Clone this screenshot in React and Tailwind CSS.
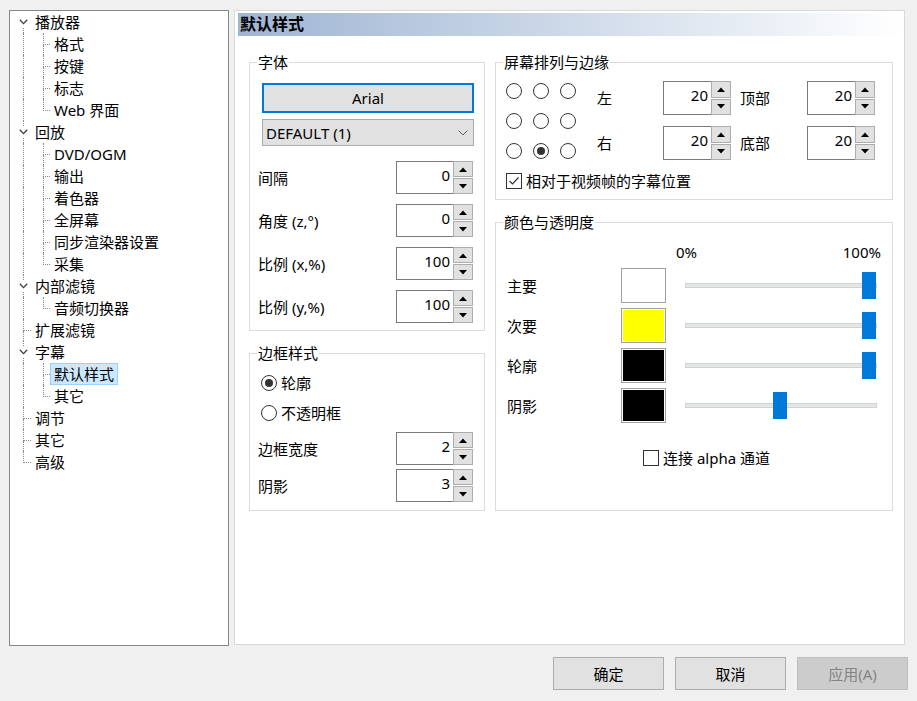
import React from "react";

const FONT = "font-['Noto_Sans','Noto_Sans_CJK_SC',sans-serif]";

const treeRows = [
  { t: "播放器", kind: "exp", first: true },
  { t: "格式", kind: "child" },
  { t: "按键", kind: "child" },
  { t: "标志", kind: "child" },
  { t: "Web 界面", kind: "child", last: true },
  { t: "回放", kind: "exp" },
  { t: "DVD/OGM", kind: "child" },
  { t: "输出", kind: "child" },
  { t: "着色器", kind: "child" },
  { t: "全屏幕", kind: "child" },
  { t: "同步渲染器设置", kind: "child" },
  { t: "采集", kind: "child", last: true },
  { t: "内部滤镜", kind: "exp" },
  { t: "音频切换器", kind: "child", last: true },
  { t: "扩展滤镜", kind: "leaf" },
  { t: "字幕", kind: "exp" },
  { t: "默认样式", kind: "child", sel: true },
  { t: "其它", kind: "child", last: true },
  { t: "调节", kind: "leaf" },
  { t: "其它", kind: "leaf" },
  { t: "高级", kind: "leaf", last: true },
];

function Chevron() {
  return (
    <svg width="9" height="6" viewBox="0 0 9 6">
      <path d="M0.8 0.8 L4.5 4.6 L8.2 0.8" fill="none" stroke="#3c3c3c" strokeWidth="1.3" />
    </svg>
  );
}

function TreeRow({ row }) {
  let cellA;
  if (row.kind === "exp") {
    cellA = (
      <div className="w-[21px] h-full flex flex-col shrink-0">
        <div className={row.first ? "h-[5px]" : "h-[5px] ml-[13px] border-l border-dotted border-[#8a8a8a]"} />
        <div className="h-[12px] flex items-center pl-[9px]">
          <Chevron />
        </div>
        <div className="h-[5px] ml-[13px] border-l border-dotted border-[#8a8a8a]" />
      </div>
    );
  } else if (row.kind === "leaf") {
    cellA = (
      <div className="w-[21px] h-full flex flex-col shrink-0">
        <div className="h-[12px] ml-[13px] border-l border-b border-dotted border-[#8a8a8a]" />
        <div className={row.last ? "h-[10px]" : "h-[10px] ml-[13px] border-l border-dotted border-[#8a8a8a]"} />
      </div>
    );
  } else {
    cellA = (
      <div className="w-[21px] h-full flex shrink-0">
        <div className="h-full ml-[13px] border-l border-dotted border-[#8a8a8a]" />
      </div>
    );
  }
  return (
    <div className="h-[22px] flex items-stretch">
      {cellA}
      {row.kind === "child" && (
        <div className="w-[19px] h-full flex flex-col shrink-0">
          <div className="h-[12px] ml-[12px] border-l border-b border-dotted border-[#8a8a8a]" />
          <div className={row.last ? "h-[10px]" : "h-[10px] ml-[12px] border-l border-dotted border-[#8a8a8a]"} />
        </div>
      )}
      <div
        className={
          row.sel
            ? "px-[3px] h-[22px] leading-[20px] border border-[#99d1ff] bg-[#cce8ff] whitespace-nowrap"
            : "px-[4px] h-[22px] leading-[22px] whitespace-nowrap"
        }
      >
        {row.t}
      </div>
    </div>
  );
}

function Tri({ up }) {
  return (
    <svg width="8" height="5" viewBox="0 0 8 5">
      {up ? <path d="M0 5 L4 0.5 L8 5 Z" fill="#000" /> : <path d="M0 0 L4 4.5 L8 0 Z" fill="#000" />}
    </svg>
  );
}

function Spin({ value, w = "w-[77px]", h = "h-[33px]" }) {
  return (
    <div className={`flex ${w} ${h} shrink-0`}>
      <div className="flex-1 border border-r-0 border-[#7a7a7a] bg-white text-right pr-[3px] pt-[3px] leading-[20px]">
        {value}
      </div>
      <div className="w-[20px] flex flex-col gap-[1px]">
        <div className="flex-1 border border-[#adadad] bg-[#e1e1e1] flex items-center justify-center">
          <Tri up />
        </div>
        <div className="flex-1 border border-[#adadad] bg-[#e1e1e1] flex items-center justify-center">
          <Tri />
        </div>
      </div>
    </div>
  );
}

function Radio({ on }) {
  return (
    <div className="w-[16px] h-[16px] rounded-full border border-[#333] bg-white flex items-center justify-center shrink-0">
      {on && <div className="w-[8px] h-[8px] rounded-full bg-[#333]" />}
    </div>
  );
}

function Check({ on }) {
  return (
    <div className="w-[16px] h-[16px] border border-[#333] bg-white shrink-0 flex items-center justify-center">
      {on && (
        <svg width="14" height="14" viewBox="0 0 14 14">
          <path d="M2.5 7 L5.5 10 L11.5 3.5" fill="none" stroke="#333" strokeWidth="1.2" />
        </svg>
      )}
    </div>
  );
}

function Group({ title, children, className = "" }) {
  return (
    <fieldset className={`border border-[#dcdcdc] ${className}`}>
      <legend className="ml-[7px] px-[1px] leading-[20px]">{title}</legend>
      {children}
    </fieldset>
  );
}

function SpinRow({ label, value }) {
  return (
    <div className="h-[33px] flex items-center justify-between pl-[8px] pr-[11px]">
      <span className="leading-[20px]">{label}</span>
      <Spin value={value} />
    </div>
  );
}

function ColorRow({ label, color, pos }) {
  return (
    <div className="h-[35px] flex items-center pl-[11px]">
      <div className="w-[114px] leading-[20px]">{label}</div>
      <div className="w-[45px] h-[35px] border border-[#a0a0a0] bg-white p-[1px]">
        <div className={`w-full h-full ${color}`} />
      </div>
      <div className="ml-[19px] w-[192px] h-[27px] relative flex items-center">
        <div className="w-full h-[5px] bg-[#e3e6e6] border border-[#d3d3d3]" />
        <div className={`absolute top-0 ${pos} w-[14px] h-[27px] bg-[#0078d7]`} />
      </div>
    </div>
  );
}

export default function App() {
  return (
    <div className={`w-[917px] h-[701px] bg-[#f0f0f0] text-[15px] text-black ${FONT} overflow-hidden`}>
      <div className="flex items-start pt-[10px] pl-[9px] gap-[5px]">
        {/* Tree */}
        <div className="w-[220px] h-[636px] border border-[#828790] bg-white">
          {treeRows.map((r, i) => (
            <TreeRow key={i} row={r} />
          ))}
        </div>

        {/* Main panel */}
        <div className="w-[671px] h-[635px] border border-[#d9d9d9] bg-white">
          <div className="mt-[2px] ml-[3px] w-[665px] h-[23px] bg-linear-to-r from-[#9fb5d3] to-white">
            <div className="pl-[2px] leading-[23px] text-[16px] font-bold">默认样式</div>
          </div>

          <div className="flex gap-[10px] pl-[14px] mt-[16px]">
            {/* left column */}
            <div className="w-[236px] flex flex-col gap-[12px]">
              <Group title="字体">
                <div className="pt-[11px] pb-[7px]">
                  <div className="ml-[12px] w-[212px] h-[30px] border-2 border-[#0078d7] bg-[#e1e1e1] text-center leading-[26px]">
                    Arial
                  </div>
                  <div className="mt-[6px] ml-[12px] w-[212px] h-[27px] border border-[#adadad] bg-[#e1e1e1] flex items-center justify-between pl-[3px] pr-[5px]">
                    <span className="leading-[20px]">DEFAULT (1)</span>
                    <svg width="10" height="6" viewBox="0 0 10 6">
                      <path d="M0.5 0.5 L5 5 L9.5 0.5" fill="none" stroke="#606060" strokeWidth="1" />
                    </svg>
                  </div>
                  <div className="mt-[15px] flex flex-col gap-[10px]">
                    <SpinRow label="间隔" value="0" />
                    <SpinRow label="角度 (z,°)" value="0" />
                    <SpinRow label="比例 (x,%)" value="100" />
                    <SpinRow label="比例 (y,%)" value="100" />
                  </div>
                </div>
              </Group>

              <Group title="边框样式">
                <div className="pt-[10px] pb-[8px] flex flex-col">
                  <div className="h-[20px] flex items-center pl-[11px] gap-[4px]">
                    <Radio on />
                    <span className="leading-[20px]">轮廓</span>
                  </div>
                  <div className="mt-[10px] h-[20px] flex items-center pl-[11px] gap-[4px]">
                    <Radio />
                    <span className="leading-[20px]">不透明框</span>
                  </div>
                  <div className="mt-[9px]">
                    <SpinRow label="边框宽度" value="2" />
                  </div>
                  <div className="mt-[4px]">
                    <SpinRow label="阴影" value="3" />
                  </div>
                </div>
              </Group>
            </div>

            {/* right column */}
            <div className="w-[398px] flex flex-col gap-[12px]">
              <Group title="屏幕排列与边缘">
                <div className="pt-[9px] pb-[8px] pl-[10px]">
                  <div className="flex items-start">
                    <div className="mt-[2px] grid grid-cols-[16px_16px_16px] gap-x-[11px] gap-y-[14px]">
                      <Radio />
                      <Radio />
                      <Radio />
                      <Radio />
                      <Radio />
                      <Radio />
                      <Radio />
                      <Radio on />
                      <Radio />
                    </div>
                    <div className="ml-[21px] grid grid-cols-[66px_68px_76px_68px] grid-rows-[34px_34px] gap-y-[11px] items-center">
                      <span className="leading-[20px]">左</span>
                      <Spin value="20" w="w-[68px]" h="h-[34px]" />
                      <span className="pl-[9px] leading-[20px]">顶部</span>
                      <Spin value="20" w="w-[68px]" h="h-[34px]" />
                      <span className="leading-[20px]">右</span>
                      <Spin value="20" w="w-[68px]" h="h-[34px]" />
                      <span className="pl-[9px] leading-[20px]">底部</span>
                      <Spin value="20" w="w-[68px]" h="h-[34px]" />
                    </div>
                  </div>
                  <div className="mt-[11px] h-[20px] flex items-center gap-[4px]">
                    <Check on />
                    <span className="leading-[20px]">相对于视频帧的字幕位置</span>
                  </div>
                </div>
              </Group>

              <Group title="颜色与透明度">
                <div className="pt-[10px] pb-[42px]">
                  <div className="ml-[180px] w-[205px] h-[20px] flex justify-between leading-[20px]">
                    <span>0%</span>
                    <span>100%</span>
                  </div>
                  <div className="mt-[6px] flex flex-col gap-[5px]">
                    <ColorRow label="主要" color="bg-white" pos="left-[177px]" />
                    <ColorRow label="次要" color="bg-[#ffff00]" pos="left-[177px]" />
                    <ColorRow label="轮廓" color="bg-black" pos="left-[177px]" />
                    <ColorRow label="阴影" color="bg-black" pos="left-[88px]" />
                  </div>
                  <div className="mt-[25px] pl-[147px] h-[20px] flex items-center gap-[4px]">
                    <Check />
                    <span className="leading-[20px]">连接 alpha 通道</span>
                  </div>
                </div>
              </Group>
            </div>
          </div>
        </div>
      </div>

      {/* Buttons */}
      <div className="mt-[11px] flex justify-end gap-[11px] pr-[9px]">
        <div className="w-[111px] h-[33px] border border-[#adadad] bg-[#e1e1e1] flex items-center justify-center leading-[20px]">
          确定
        </div>
        <div className="w-[111px] h-[33px] border border-[#adadad] bg-[#e1e1e1] flex items-center justify-center leading-[20px]">
          取消
        </div>
        <div className="w-[111px] h-[33px] border border-[#bfbfbf] bg-[#cccccc] text-[#838383] flex items-center justify-center leading-[20px]">
          应用(A)
        </div>
      </div>
    </div>
  );
}
